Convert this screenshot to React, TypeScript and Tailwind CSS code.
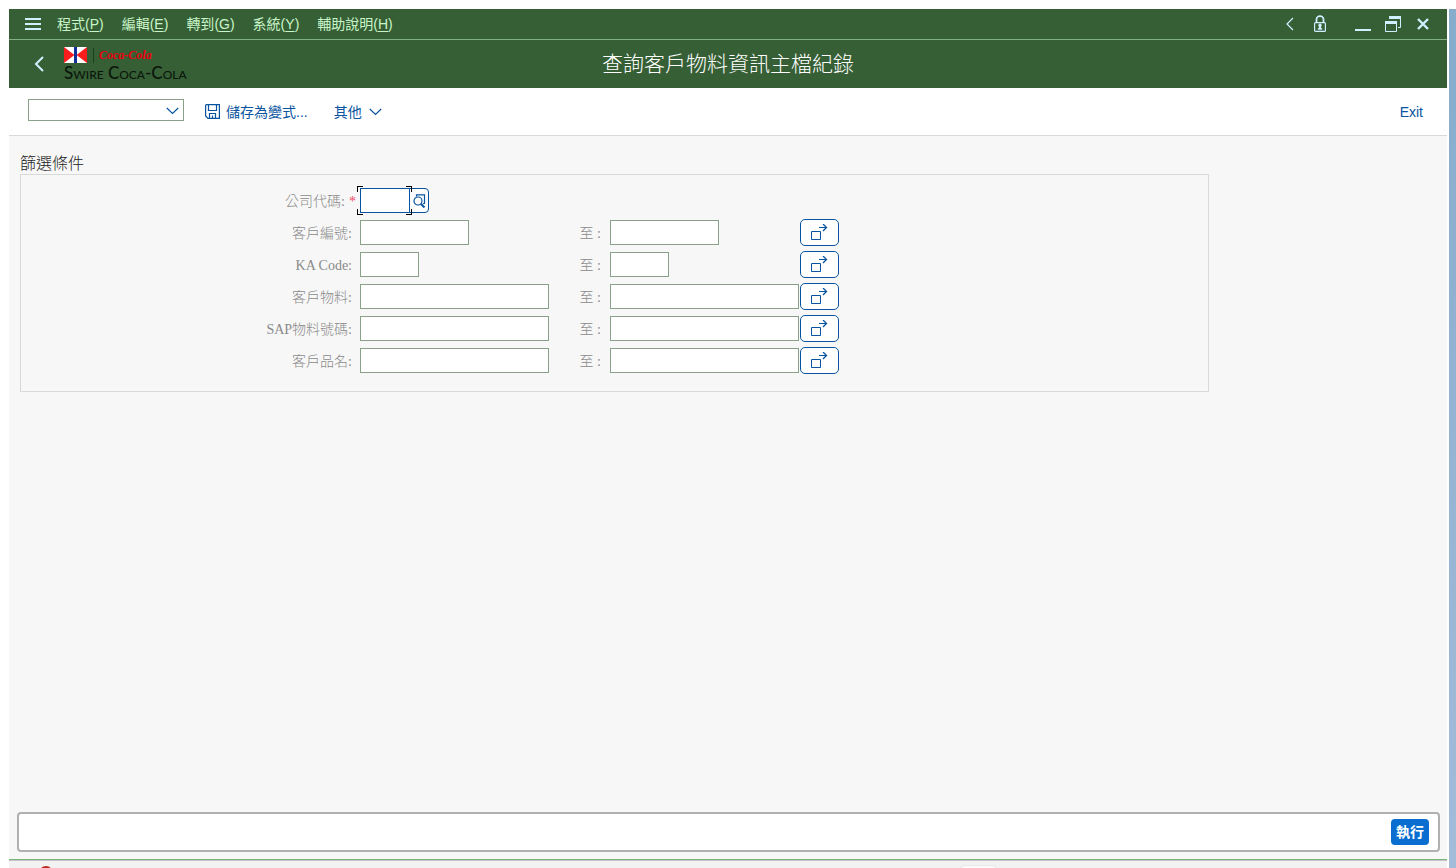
import React from "react";

type RangeRow = { id: string; label: string; width: string };

const menus = [
  { text: "程式", key: "P" },
  { text: "編輯", key: "E" },
  { text: "轉到", key: "G" },
  { text: "系統", key: "Y" },
  { text: "輔助說明", key: "H" },
];

const rows: RangeRow[] = [
  { id: "customer", label: "客戶編號:", width: "w-[109px]" },
  { id: "ka", label: "KA Code:", width: "w-[59px]" },
  { id: "custmat", label: "客戶物料:", width: "w-[189px]" },
  { id: "sapmat", label: "SAP物料號碼:", width: "w-[189px]" },
  { id: "custname", label: "客戶品名:", width: "w-[189px]" },
];

const fieldClass = "block h-[25px] border border-[#89a089] bg-white px-1 text-sm outline-none";
const labelClass =
  "font-['Liberation_Serif','Noto_Sans_CJK_TC',serif] pt-0.5 text-sm leading-5 font-light text-[#8a8a8a]";

function MenuBar() {
  return (
    <div className="flex h-[31px] shrink-0 items-center border-b border-[#80b080] bg-[#365f36] pr-[18px] pl-4 text-[#d1efff]">
      <button type="button" aria-label="功能表" className="mr-4">
        <svg width="16" height="14" viewBox="0 0 16 14" fill="currentColor">
          <path d="M0 1h16v2H0zM0 6h16v2H0zM0 11h16v2H0z" />
        </svg>
      </button>
      <nav className="flex gap-[18px] text-sm leading-5 text-[#c8f5c8]">
        {menus.map((m) => (
          <button type="button" key={m.key}>
            {m.text}(<span className="underline underline-offset-2">{m.key}</span>)
          </button>
        ))}
      </nav>
      <div className="ml-auto flex items-center">
        <button type="button" aria-label="上一個" className="mr-5">
          <svg width="8" height="14" viewBox="0 0 8 14" fill="none" stroke="currentColor" strokeWidth="1.2">
            <path d="M7 1 1 7l6 6" />
          </svg>
        </button>
        <button type="button" aria-label="鎖定" className="mr-[29px]">
          <svg width="12" height="18" viewBox="0 0 12 18" fill="none" stroke="currentColor">
            <path d="M2.500 7.500V4.500a3.500 3.300 0 0 1 7 0v3" strokeWidth="1.800" />
            <rect x="0.600" y="7.600" width="10.800" height="8.800" rx="1" strokeWidth="1.200" />
            <path d="M6 8.500a1.800 1.800 0 0 1 1.200 3.100V13.300h1v1.400H3.800v-1.400h1v-1.700A1.800 1.800 0 0 1 6 8.500z" fill="currentColor" stroke="none" />
          </svg>
        </button>
        <button type="button" aria-label="最小化" className="mr-3.5">
          <svg width="16" height="16" viewBox="0 0 16 16" fill="currentColor">
            <path d="M0 13h16v2H0z" />
          </svg>
        </button>
        <button type="button" aria-label="還原" className="mr-4">
          <svg width="16" height="16" viewBox="0 0 16 16" fill="none" stroke="currentColor">
            <path d="M4 1.500h12M0 6.500h12" strokeWidth="3" />
            <path d="M15.500 1v10.500H13M.5 5v10.500h11V5" />
          </svg>
        </button>
        <button type="button" aria-label="關閉">
          <svg width="12" height="12" viewBox="0 0 12 12" fill="none" stroke="currentColor" strokeWidth="2.400">
            <path d="m1 1 10 10M11 1 1 11" />
          </svg>
        </button>
      </div>
    </div>
  );
}

function Logo() {
  return (
    <div className="flex flex-col">
      <div className="flex h-[17px] items-center">
        <svg width="23" height="16" viewBox="0 0 23 16">
          <rect width="23" height="16" fill="#fff" />
          <path d="M0 0v16l10.500-8zM23 0v16l-10.500-8z" fill="#fb1d1d" transform="translate(0 0)" />
          <path d="M2 0h7.500v6.500zM2 16h7.500V9.500zM21 0h-7.500v6.500zM21 16h-7.500V9.500z" fill="#fff" />
          <path d="M10 0h3v16h-3z" fill="#12309c" />
        </svg>
        <span className="ml-1.5 h-[15px] w-px bg-[#1f3d1f]" />
        <span className="ml-[5px] font-['Liberation_Serif',serif] text-xs leading-4 font-bold text-[#e8000b] italic">
          Coca‑Cola
        </span>
      </div>
      <span className="font-['Lato',sans-serif] text-[17px] leading-[18px] font-medium whitespace-nowrap text-[#0b160b] [font-variant:small-caps]">
        Swire Coca-Cola
      </span>
    </div>
  );
}

function Header() {
  return (
    <header className="grid h-12 shrink-0 grid-cols-[1fr_auto_1fr] items-center bg-[#365f36]">
      <div className="flex items-center pl-[25px]">
        <button type="button" aria-label="返回" className="mr-[19px] text-[#d1efff]">
          <svg width="11" height="16" viewBox="0 0 11 16" fill="none" stroke="currentColor" strokeWidth="2">
            <path d="M9 1 2 8l7 7" />
          </svg>
        </button>
        <Logo />
      </div>
      <h1 className="text-[21px] leading-7 font-light text-white">查詢客戶物料資訊主檔紀錄</h1>
    </header>
  );
}

function Chevron() {
  return (
    <svg width="13" height="8" viewBox="0 0 13 8" fill="none" stroke="currentColor" strokeWidth="1.2">
      <path d="m.8 1 5.700 5.500L12.200 1" />
    </svg>
  );
}

function Toolbar() {
  return (
    <div className="flex h-12 shrink-0 items-center border-b border-[#d9d9d9] bg-white pr-6 pl-[19px] text-sm leading-5 text-[#0854a0]">
      <div className="relative mb-1 w-[156px]">
        <select aria-label="指令" className="block h-[22px] w-full appearance-none border border-[#89a089] bg-white outline-none">
          <option></option>
        </select>
        <span className="pointer-events-none absolute top-2 right-[5px]">
          <Chevron />
        </span>
      </div>
      <button type="button" className="ml-[21px] flex items-center gap-1.5">
        <svg width="15" height="15" viewBox="0 0 15 15" fill="none" stroke="currentColor" strokeWidth="1.2">
          <path d="M.6 1.600q0-1 1-1h12.800v13.800H3L.6 12z" />
          <path d="M3.500.6v5.900h8V.6M4.500 14V9.500h6V14M7.500 14v-2.500" />
        </svg>
        儲存為變式...
      </button>
      <button type="button" className="ml-[26px] flex items-center gap-[7px]">
        其他
        <Chevron />
      </button>
      <button type="button" className="ml-auto">
        Exit
      </button>
    </div>
  );
}

function CompanyRow() {
  return (
    <div className="flex h-[27px] items-center">
      <label htmlFor="company" className={`${labelClass} flex w-[339px] justify-end gap-1 pr-1`}>
        公司代碼:<span className="text-[#f04a6a]">*</span>
      </label>
      <div className="relative flex">
        <input id="company" className="block h-[25px] w-[50px] border border-[#0854a0] bg-white px-1 text-sm outline-none" />
        <button
          type="button"
          aria-label="搜尋說明"
          className="-ml-px flex h-[25px] w-5 items-center justify-center rounded-r border border-[#0854a0] bg-white text-[#0854a0]"
        >
          <svg width="13" height="14" viewBox="0 0 13 14" fill="none" stroke="currentColor" strokeWidth="1.200">
            <path d="M3.500 2.500V.8h8v8.700H10" />
            <circle cx="5" cy="7" r="4" />
            <path d="m7.800 9.800 3.700 3.700" strokeWidth="2" />
          </svg>
        </button>
        <span className="pointer-events-none absolute -top-0.5 -left-[3px] size-1.5 border-t border-l border-black" />
        <span className="pointer-events-none absolute -bottom-0.5 -left-[3px] size-1.5 border-b border-l border-black" />
        <span className="pointer-events-none absolute -top-0.5 left-[46px] size-1.5 border-t border-r border-black" />
        <span className="pointer-events-none absolute -bottom-0.5 left-[46px] size-1.5 border-r border-b border-black" />
      </div>
    </div>
  );
}

function Range({ row }: { row: RangeRow }) {
  return (
    <div className="flex h-[27px] items-center">
      <label htmlFor={row.id + "-from"} className={`${labelClass} w-[339px] pr-2 text-right`}>
        {row.label}
      </label>
      <div className="w-[189px]">
        <input id={row.id + "-from"} className={`${fieldClass} ${row.width}`} />
      </div>
      <label htmlFor={row.id + "-to"} className={`${labelClass} w-[61px] pr-[9px] text-right`}>
        至 :
      </label>
      <div className="w-[190px]">
        <input id={row.id + "-to"} className={`${fieldClass} ${row.width}`} />
      </div>
      <button
        type="button"
        aria-label="多重選擇"
        className="flex h-[27px] w-[39px] items-center justify-center rounded-[5px] border border-[#0854a0] bg-white text-[#0854a0]"
      >
        <svg width="17" height="17" viewBox="0 0 17 17" fill="none" stroke="currentColor">
          <path d="M.5 7.500h9v8h-9zM8 3.500h7.500" />
          <path d="m12 0 3.500 3.500L12 7" strokeWidth="1.300" />
        </svg>
      </button>
    </div>
  );
}

export default function App() {
  return (
    <div className="flex h-screen overflow-hidden bg-white pt-[9px] pl-[9px] font-['Liberation_Sans','Noto_Sans_CJK_TC',sans-serif]">
      <div className="flex min-w-0 flex-1 flex-col bg-[#f7f7f7]">
        <MenuBar />
        <Header />
        <Toolbar />
        <main className="flex-1 px-[11px] pt-[18px]">
          <h2 className="text-base leading-5 font-light text-[#222]">篩選條件</h2>
          <section className="flex w-[84%] flex-col gap-[5px] border border-[#d9d9d9] pt-3 pb-[17px]">
            <CompanyRow />
            {rows.map((row) => (
              <Range key={row.id} row={row} />
            ))}
          </section>
        </main>
        <div className="mr-[7px] mb-[7px] ml-2 flex h-10 shrink-0 items-center justify-end rounded border-2 border-[#b0b0b0] bg-white pr-[9px]">
          <button type="button" className="h-[26px] rounded bg-[#0a6ed1] px-[5px] text-sm leading-5 font-bold text-white">
            執行
          </button>
        </div>
        <footer className="flex h-[9px] shrink-0 items-start overflow-hidden border-t border-[#7db37d] bg-[#f2f2f2] shadow-[inset_0_1px_0_#c4c4c4]">
          <svg width="14" height="14" viewBox="0 0 14 14" className="mt-1.5 ml-[30px] shrink-0">
            <circle cx="7" cy="7" r="7" fill="#bb2a1e" />
          </svg>
          <span className="mt-[5px] ml-auto mr-[450px] h-5 w-[37px] shrink-0 rounded border border-[#e8e8e8] bg-[#fafafa]" />
        </footer>
      </div>
      <div className="ml-0.5 w-[7px] shrink-0 bg-linear-to-b from-[#86accb] to-[#a2bcda]" />
    </div>
  );
}
